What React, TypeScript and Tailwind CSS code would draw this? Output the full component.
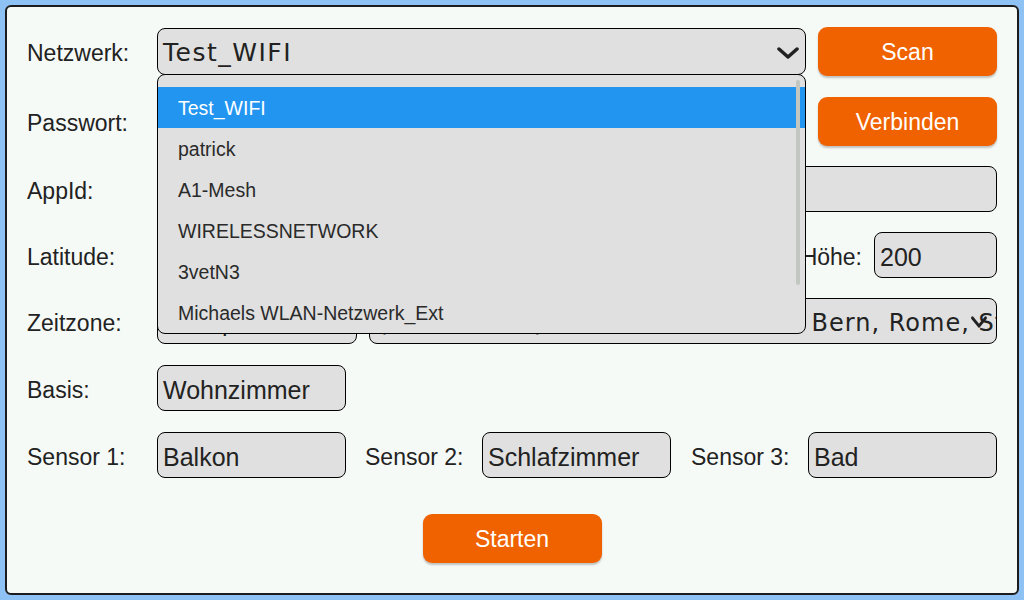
import React from "react";

const networks = [
  "Test_WIFI",
  "patrick",
  "A1-Mesh",
  "WIRELESSNETWORK",
  "3vetN3",
  "Michaels WLAN-Netzwerk_Ext",
];

const sans = "font-['Liberation_Sans',Arial,sans-serif]";
const geo = "font-['DejaVu_Sans',sans-serif]";

function Label({ children, className = "" }: { children: React.ReactNode; className?: string }) {
  return (
    <div className={`shrink-0 whitespace-nowrap pt-[4px] text-[23px] text-[#222] ${className}`}>{children}</div>
  );
}

function Field({ value = "", className = "" }: { value?: string; className?: string }) {
  return (
    <div
      className={`flex h-[46px] items-center overflow-hidden whitespace-nowrap rounded-[8px] border border-black bg-[#e0e0e0] pl-[5px] pt-[5px] text-[25px] text-[#222] ${className}`}
    >
      {value}
    </div>
  );
}

function Chevron({ w = 22 }: { w?: number }) {
  return (
    <svg width={w} height="12" viewBox="0 0 22 12" className="shrink-0" preserveAspectRatio="none">
      <polyline points="2,2 11,10 20,2" fill="none" stroke="#222" strokeWidth="3.5" strokeLinecap="round" strokeLinejoin="round" />
    </svg>
  );
}

function Button({ children, className = "" }: { children: React.ReactNode; className?: string }) {
  return (
    <div
      className={`flex h-[49px] w-[179px] shrink-0 items-center justify-center rounded-[9px] bg-[#f06200] pt-[2px] text-[23px] text-white shadow-[0_2px_2px_rgba(0,0,0,0.22)] ${className}`}
    >
      {children}
    </div>
  );
}

export default function App() {
  return (
    <div className={`h-[600px] w-[1024px] bg-[#8fc2f4] p-[5px] ${sans}`}>
      <div className="relative flex h-[590px] flex-col gap-[20px] rounded-[6px] border-2 border-[#1c1c1c] bg-[#f6faf7] px-[20px] pt-[19px]">
        {/* Netzwerk */}
        <div className="flex h-[50px] items-center">
          <Label className="w-[130px]">Netzwerk:</Label>
          <div className="relative flex-1">
            <div
              className={`flex h-[47px] items-center justify-between rounded-[8px] border border-black bg-[#e0e0e0] pl-[5px] pr-[6px] pt-[3px] text-[25px] tracking-[1.5px] text-[#222] ${geo}`}
            >
              <span>Test_WIFI</span>
              <Chevron />
            </div>
            {/* open dropdown */}
            <div className="absolute left-0 right-0 top-full z-10 -mt-px h-[260px] overflow-hidden rounded-[8px] border border-black bg-[#e0e0e0] pt-[12px]">
              {networks.map((n, i) => (
                <div
                  key={n}
                  className={`flex h-[41px] items-center pl-[20px] pt-[4px] text-[19.5px] ${
                    i === 0 ? "bg-[#2195f0] text-white" : "text-[#2a2a2a]"
                  }`}
                >
                  {n}
                </div>
              ))}
              <div className="absolute right-[5px] top-[5px] h-[205px] w-[4px] rounded-full bg-[#c2c7c2]" />
            </div>
          </div>
          <Button className="ml-[12px]">Scan</Button>
        </div>

        {/* Passwort */}
        <div className="flex h-[50px] items-center">
          <Label className="w-[130px]">Passwort:</Label>
          <Field className="flex-1" />
          <Button className="ml-[12px]">Verbinden</Button>
        </div>

        {/* AppId */}
        <div className="flex h-[46px] items-center">
          <Label className="w-[130px]">AppId:</Label>
          <Field className="flex-1" />
        </div>

        {/* Latitude / Longitude / Höhe */}
        <div className="flex h-[46px] items-center gap-[12px]">
          <Label className="w-[118px]">Latitude:</Label>
          <Field className="w-[200px]" value="47.5" />
          <Label>Longitude:</Label>
          <Field className="flex-1" value="9.7" />
          <Label>Höhe:</Label>
          <Field className="w-[123px]" value="200" />
        </div>

        {/* Zeitzone */}
        <div className="flex h-[46px] items-center">
          <Label className="w-[130px]">Zeitzone:</Label>
          <div
            className={`flex h-[46px] w-[200px] items-center overflow-hidden whitespace-nowrap rounded-[8px] border border-black bg-[#e0e0e0] pl-[5px] pt-[3px] text-[24px] tracking-[1px] text-[#222] ${geo}`}
          >
            Europe/Vienna
          </div>
          <div
            className={`relative ml-[12px] flex h-[46px] flex-1 items-center overflow-hidden whitespace-nowrap rounded-[8px] border border-black bg-[#e0e0e0] pl-[8px] pt-[3px] text-[24px] tracking-[1px] text-[#222] ${geo}`}
          >
            (UTC+01:00) Amsterdam, Berlin, Bern, Rome, Stockholm, Vienna
            <div className="absolute right-[9px] top-[17px]">
              <Chevron w={16} />
            </div>
          </div>
        </div>

        {/* Basis */}
        <div className="mt-[1px] flex h-[46px] items-center">
          <Label className="w-[130px]">Basis:</Label>
          <Field className="w-[189px]" value="Wohnzimmer" />
        </div>

        {/* Sensoren */}
        <div className="mt-[1px] flex h-[46px] items-center">
          <Label className="w-[130px]">Sensor 1:</Label>
          <Field className="w-[189px]" value="Balkon" />
          <Label className="ml-[19px] w-[117px]">Sensor 2:</Label>
          <Field className="w-[189px]" value="Schlafzimmer" />
          <Label className="ml-[20px] w-[117px]">Sensor 3:</Label>
          <Field className="w-[189px]" value="Bad" />
        </div>

        <div className="mt-[16px] flex justify-center">
          <Button>Starten</Button>
        </div>
      </div>
    </div>
  );
}
